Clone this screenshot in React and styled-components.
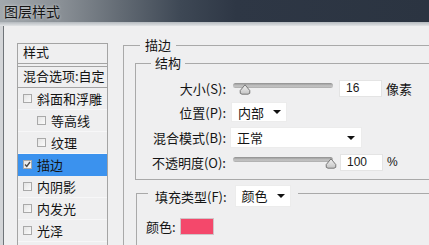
import React from 'react';
import styled, { createGlobalStyle } from 'styled-components';

const Global = createGlobalStyle`
  html, body { margin: 0; padding: 0; background: #efeff0; }
  body { font-family: "Noto Sans CJK SC", "Liberation Sans", sans-serif; }
  * { box-sizing: border-box; }
`;

const Window = styled.div`
  width: 429px;
  height: 245px;
  overflow: hidden;
  background: #efeff0;
  display: flex;
  flex-direction: column;
  font-size: 13px;
  color: #141414;
`;

const TitleBar = styled.div`
  flex: none;
  height: 22px;
  display: flex;
  align-items: center;
  padding-left: 4px;
  font-size: 14px;
  color: #141414;
  text-shadow: 0 0 3px rgba(255, 255, 255, 0.7);
  background: linear-gradient(
    to right,
    #a2a8ad 0%,
    #8a9096 14%,
    #636b74 28%,
    #3e4855 42%,
    #2e3745 55%,
    #2b3441 100%
  );
`;

const TitleEdge = styled.div`
  flex: none;
  height: 4px;
  background: linear-gradient(#b4b9be, #e2e4e6);
`;

const Body = styled.div`
  flex: 1;
  min-height: 0;
  display: flex;
  align-items: flex-start;
  gap: 15px;
  padding: 11px 0 0 14px;
  border-left: 3px solid #d3d5d8;
  box-shadow: inset 1px 0 0 #6f7479;
`;

const StyleList = styled.div`
  flex: none;
  width: 91px;
  height: 260px;
  margin-top: 6px;
  border: 1px solid #a4a4a4;
  border-bottom: none;
  display: flex;
  flex-direction: column;
`;

const ListHeader = styled.div`
  height: 20px;
  padding: 0 0 0 5px;
  line-height: 15px;
  border-bottom: 1px solid #a4a4a4;
`;

const BlendRow = styled.div`
  height: 22px;
  margin-top: 2px;
  padding-left: 5px;
  line-height: 17px;
  white-space: nowrap;
  overflow: hidden;
  border-top: 1px solid #a4a4a4;
  border-bottom: 1px solid #a4a4a4;
`;

const Item = styled.div`
  height: 22px;
  display: flex;
  align-items: center;
  gap: 5px;
  padding-left: ${(p) => (p.$sub ? 19 : 5)}px;
  white-space: nowrap;
  background: ${(p) => (p.$active ? '#3b92ee' : 'transparent')};
  border-bottom: 1px solid ${(p) => (p.$active ? '#3b92ee' : '#f7f7f8')};
`;

const Box = styled.span`
  flex: none;
  width: 9px;
  height: 9px;
  border: 1px solid #a9a9a9;
  background: linear-gradient(135deg, #e4e4e4, #fbfbfb);
  display: flex;
  align-items: center;
  justify-content: center;
`;

const Check = ({ on }) => (
  <Box>
    {on && (
      <svg width="7" height="7" viewBox="0 0 7 7">
        <path d="M1 3.5 L2.8 5.5 L6 1" fill="none" stroke="#4a4a4a" strokeWidth="1.4" />
      </svg>
    )}
  </Box>
);

const Right = styled.div`
  flex: 1;
  min-width: 0;
`;

const Group = styled.fieldset`
  margin: 0;
  padding: 0;
  min-width: 0;
  border: 1px solid #a9a9a9;
  border-right: none;
  border-bottom: ${(p) => (p.$closed ? '1px solid #a9a9a9' : 'none')};
  margin-left: ${(p) => p.$ml || 0}px;
  margin-top: ${(p) => p.$mt || 0}px;
`;

const Legend = styled.legend`
  height: 16px;
  line-height: 16px;
  padding: 0 ${(p) => p.$pad}px;
  margin-left: ${(p) => p.$ml}px;
  font-size: 13px;
`;

const OuterInner = styled.div`
  padding: 2px 0 0 11px;
`;

const Grid = styled.div`
  display: grid;
  grid-template-columns: 90px auto;
  grid-template-rows: 18px 20px 21px 18px;
  column-gap: 4px;
  row-gap: 5px;
  padding: 8px 0 8px 0;
`;

const Label = styled.div`
  display: flex;
  align-items: center;
  justify-content: flex-end;
  white-space: nowrap;
`;

const Controls = styled.div`
  display: flex;
  align-items: center;
  gap: ${(p) => p.$gap || 3}px;
`;

const Slider = styled.div`
  position: relative;
  width: 106px;
  height: 18px;
  flex: none;
`;

const Track = styled.div`
  margin: 4px 3px 0 3px;
  height: 5px;
  border-radius: 3px;
  background: linear-gradient(#8f8f8f, #c6c6c6 60%, #acacac);
`;

const Thumb = styled.svg`
  position: absolute;
  top: 5px;
  left: calc(3px + ${(p) => p.$pct} * 1px - 6px);
`;

const SliderCtl = ({ pct }) => (
  <Slider>
    <Track />
    <Thumb $pct={pct} width="12" height="11" viewBox="0 0 12 11">
      <defs>
        <linearGradient id={`tg${pct}`} x1="0" y1="0" x2="0" y2="1">
          <stop offset="0" stopColor="#f2f2f2" />
          <stop offset="1" stopColor="#c4c4c4" />
        </linearGradient>
      </defs>
      <path
        d="M6 0.8 L10.8 6.6 Q11.6 10.2 9 10.2 L3 10.2 Q0.4 10.2 1.2 6.6 Z"
        fill={`url(#tg${pct})`}
        stroke="#6c6c6c"
        strokeWidth="0.9"
      />
    </Thumb>
  </Slider>
);

const NumInput = styled.div`
  width: 43px;
  height: 17px;
  background: #fff;
  border: 1px solid #e4e4e4;
  padding-left: 6px;
  font-family: "Liberation Sans", Arial, sans-serif;
  font-size: 12px;
  line-height: 15px;
  color: #1a1a1a;
  margin-left: ${(p) => p.$ml || 0}px;
`;

const Unit = styled.span`
  margin-left: 1px;
  font-family: ${(p) => (p.$latin ? '"Liberation Sans", Arial, sans-serif' : 'inherit')};
  font-size: ${(p) => (p.$latin ? 12 : 13)}px;
`;

const Select = styled.div`
  position: relative;
  width: ${(p) => p.$w}px;
  height: ${(p) => p.$h || 20}px;
  background: #fff;
  border: 1px solid #ececec;
  display: flex;
  align-items: center;
  padding-left: 6px;
  margin-left: ${(p) => p.$ml || 0}px;
  flex: none;
  &::after {
    content: '';
    position: absolute;
    right: ${(p) => p.$ar || 5}px;
    top: 50%;
    margin-top: -2px;
    border-left: 4px solid transparent;
    border-right: 4px solid transparent;
    border-top: 4px solid #111;
  }
`;

const FillHead = styled.div`
  display: flex;
  align-items: flex-start;
  height: 16px;
`;

const FillLabel = styled.span`
  margin-top: 4px;
  line-height: 16px;
  white-space: nowrap;
`;

const FillBody = styled.div`
  padding: 16px 0 20px 9px;
  display: flex;
  align-items: center;
  gap: 4px;
`;

const Swatch = styled.div`
  width: 34px;
  height: 17px;
  background: ${(p) => p.$c};
  border: 1px solid #d0c4c7;
`;

export default function App() {
  return (
    <Window>
      <Global />
      <TitleBar>图层样式</TitleBar>
      <TitleEdge />
      <Body>
        <StyleList>
          <ListHeader>样式</ListHeader>
          <BlendRow>混合选项:自定</BlendRow>
          <Item><Check />斜面和浮雕</Item>
          <Item $sub><Check />等高线</Item>
          <Item $sub><Check />纹理</Item>
          <Item $active><Check on />描边</Item>
          <Item><Check />内阴影</Item>
          <Item><Check />内发光</Item>
          <Item><Check />光泽</Item>
        </StyleList>
        <Right>
          <Group>
            <Legend $ml={16} $pad={5}>描边</Legend>
            <OuterInner>
              <Group $closed>
                <Legend $ml={15} $pad={4}>结构</Legend>
                <Grid>
                  <Label>大小(S):</Label>
                  <Controls>
                    <SliderCtl pct={12} />
                    <NumInput>16</NumInput>
                    <Unit>像素</Unit>
                  </Controls>
                  <Label>位置(P):</Label>
                  <Controls>
                    <Select $w={56} $ml={1}>内部</Select>
                  </Controls>
                  <Label>混合模式(B):</Label>
                  <Controls>
                    <Select $w={132} $h={21} $ar={6}>正常</Select>
                  </Controls>
                  <Label>不透明度(O):</Label>
                  <Controls>
                    <SliderCtl pct={98} />
                    <NumInput $ml={1}>100</NumInput>
                    <Unit $latin>%</Unit>
                  </Controls>
                </Grid>
              </Group>
              <Group $ml={1} $mt={5}>
                <Legend $ml={11} $pad={7}>
                  <FillHead>
                    <FillLabel>填充类型(F):</FillLabel>
                    <Select $w={56} $h={22} $ml={8}>颜色</Select>
                  </FillHead>
                </Legend>
                <FillBody>
                  <span>颜色:</span>
                  <Swatch $c="#f4486b" />
                </FillBody>
              </Group>
            </OuterInner>
          </Group>
        </Right>
      </Body>
    </Window>
  );
}
